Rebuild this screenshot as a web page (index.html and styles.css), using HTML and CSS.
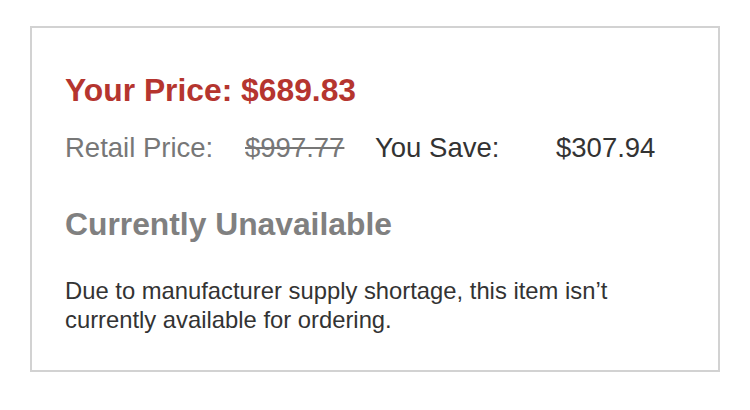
FILE: index.html
```html
<!DOCTYPE html>
<html>
<head>
<meta charset="utf-8">
<link rel="stylesheet" href="styles.css">
</head>
<body>
<div class="card">
  <div class="your-price">Your Price: $689.83</div>
  <div class="price-row">
    <span class="label">Retail Price:</span>
    <span class="retail">$997.77</span>
    <span class="save-label">You Save:</span>
    <span class="save">$307.94</span>
  </div>
  <div class="status">Currently Unavailable</div>
  <p class="note">Due to manufacturer supply shortage, this item isn’t currently available for ordering.</p>
</div>
</body>
</html>
```
FILE: styles.css
```css
html, body {
  margin: 0;
  padding: 0;
  background: #fff;
}
body {
  padding: 26px 30px;
  font-family: "Liberation Sans", Arial, sans-serif;
}
.card {
  width: 690px;
  height: 346px;
  box-sizing: border-box;
  border: 2px solid #d2d2d2;
  padding: 40px 33px 0;
}
.your-price {
  color: #b5352f;
  font-weight: bold;
  font-size: 31.8px;
  line-height: 44px;
}
.price-row {
  display: grid;
  grid-template-columns: 180px 130px 181px auto;
  font-size: 27.5px;
  line-height: 40px;
  margin-top: 16px;
  color: #333;
}
.label {
  color: #777;
}
.retail {
  color: #777;
  text-decoration: line-through;
}
.status {
  margin-top: 34px;
  color: #808080;
  font-weight: bold;
  font-size: 31.8px;
  line-height: 44px;
}
.note {
  margin: 30px 0 0;
  max-width: 600px;
  font-size: 23.8px;
  line-height: 29px;
  color: #333;
}
```
